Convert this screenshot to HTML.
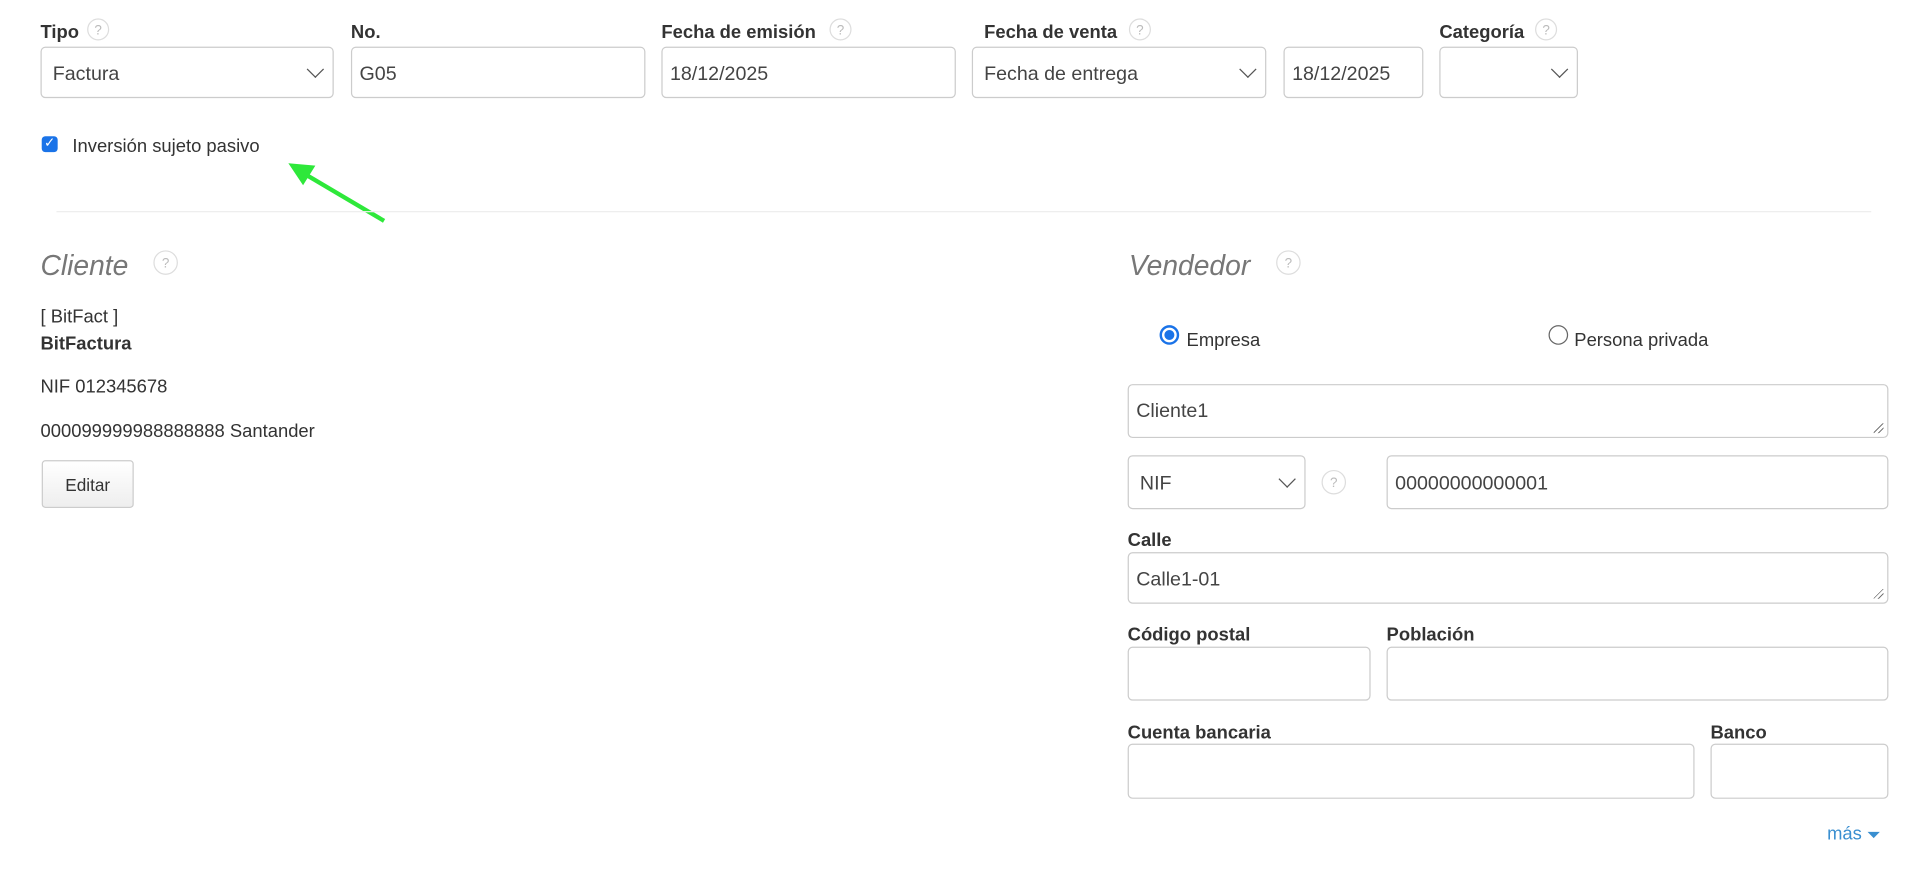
<!DOCTYPE html>
<html><head><meta charset="utf-8"><style>
html,body{margin:0;padding:0;background:#fff;overflow:hidden}
#w{position:absolute;left:0;top:0;width:1568px;height:716px;transform:scale(1.22704);transform-origin:0 0;font-family:"Liberation Sans",sans-serif;color:#333}
.a{position:absolute}
.lb{position:absolute;font-weight:bold;font-size:15px;line-height:18px;color:#333;margin-top:2px}
.q{position:absolute;width:18px;height:18px;border:1px solid #ddd;border-radius:50%;color:#bbb;font-size:11px;line-height:18px;text-align:center;box-sizing:border-box}
.in{position:absolute;border:1px solid #ccc;border-radius:4px;box-sizing:border-box;font-family:"Liberation Sans",sans-serif;font-size:16px;color:#444;padding-left:9px;padding-top:3px;display:flex;align-items:center}
.sel:after{content:"";position:absolute;right:9px;top:50%;width:9px;height:9px;border-right:1.5px solid #555;border-bottom:1.5px solid #555;transform:translateY(-75%) rotate(45deg)}
.ta:after{content:"";position:absolute;right:3px;bottom:3px;width:8px;height:8px;background:linear-gradient(135deg,transparent 45%,#777 45%,#777 52%,transparent 52%,transparent 70%,#777 70%,#777 77%,transparent 77%)}
.tx{position:absolute;font-size:15px;line-height:18px;margin-top:2px}
.h{position:absolute;font-style:italic;font-size:23px;color:#777;line-height:26px;margin-top:1px}
</style></head><body><div id="w">
<div class="lb" style="left:33px;top:16px">Tipo</div><div class="q" style="left:71px;top:15px">?</div>
<div class="lb" style="left:286px;top:16px">No.</div>
<div class="lb" style="left:539px;top:16px">Fecha de emisión</div><div class="q" style="left:676px;top:15px">?</div>
<div class="lb" style="left:802px;top:16px">Fecha de venta</div><div class="q" style="left:920px;top:15px">?</div>
<div class="lb" style="left:1173px;top:16px">Categoría</div><div class="q" style="left:1251px;top:15px">?</div>
<div class="in sel" style="left:33px;top:38px;width:239px;height:42px">Factura</div>
<div class="in" style="left:286px;top:38px;width:240px;height:42px;padding-left:6px">G05</div>
<div class="in" style="left:539px;top:38px;width:240px;height:42px;padding-left:6px">18/12/2025</div>
<div class="in sel" style="left:792px;top:38px;width:240px;height:42px">Fecha de entrega</div>
<div class="in" style="left:1046px;top:38px;width:114px;height:42px;padding-left:6px">18/12/2025</div>
<div class="in sel" style="left:1173px;top:38px;width:113px;height:42px"></div>
<div class="a" style="left:34px;top:111px;width:13px;height:13px;background:#1a73e8;border-radius:3px;color:#fff;font-size:11px;line-height:13px;text-align:center">✓</div>
<div class="tx" style="left:59px;top:109px">Inversión sujeto pasivo</div>
<svg class="a" style="left:225px;top:125px" width="100" height="65"><line x1="88" y1="55" x2="22" y2="16" stroke="#2ee83a" stroke-width="3.5"/><polygon points="10,8 32,10 22,26" fill="#2ee83a"/></svg>
<div class="a" style="left:46px;top:172px;width:1479px;height:1px;background:#eee"></div>
<div class="h" style="left:33px;top:202px">Cliente</div><div class="q" style="left:125px;top:204px;width:20px;height:20px;line-height:20px">?</div>
<div class="tx" style="left:33px;top:248px">[ BitFact ]</div>
<div class="tx" style="left:33px;top:270px;font-weight:bold">BitFactura</div>
<div class="tx" style="left:33px;top:305px">NIF 012345678</div>
<div class="tx" style="left:33px;top:341px">000099999988888888 Santander</div>
<div class="a" style="left:34px;top:375px;width:75px;height:39px;box-sizing:border-box;border:1px solid #ccc;border-radius:3px;background:linear-gradient(#fff,#eee);font-size:14px;text-align:center;line-height:38px">Editar</div>
<div class="h" style="left:920px;top:202px">Vendedor</div><div class="q" style="left:1040px;top:204px;width:20px;height:20px;line-height:20px">?</div>
<div class="a" style="left:945px;top:265px;width:16px;height:16px;box-sizing:border-box;border:2px solid #1a73e8;border-radius:50%;background:radial-gradient(#1a73e8 45%,#fff 50%)"></div>
<div class="tx" style="left:967px;top:267px">Empresa</div>
<div class="a" style="left:1262px;top:265px;width:16px;height:16px;box-sizing:border-box;border:1px solid #666;border-radius:50%"></div>
<div class="tx" style="left:1283px;top:267px">Persona privada</div>
<div class="in ta" style="left:919px;top:313px;width:620px;height:44px;padding-left:6px;align-items:flex-start;padding-top:13px">Cliente1</div>
<div class="in sel" style="left:919px;top:371px;width:145px;height:44px">NIF</div>
<div class="q" style="left:1077px;top:383px;width:20px;height:20px;line-height:20px">?</div>
<div class="in" style="left:1130px;top:371px;width:409px;height:44px;padding-left:6px">00000000000001</div>
<div class="lb" style="left:919px;top:430px">Calle</div>
<div class="in ta" style="left:919px;top:450px;width:620px;height:42px;padding-left:6px">Calle1-01</div>
<div class="lb" style="left:919px;top:507px">Código postal</div>
<div class="lb" style="left:1130px;top:507px">Población</div>
<div class="in" style="left:919px;top:527px;width:198px;height:44px"></div>
<div class="in" style="left:1130px;top:527px;width:409px;height:44px"></div>
<div class="lb" style="left:919px;top:587px">Cuenta bancaria</div>
<div class="lb" style="left:1394px;top:587px">Banco</div>
<div class="in" style="left:919px;top:606px;width:462px;height:45px"></div>
<div class="in" style="left:1394px;top:606px;width:145px;height:45px"></div>
<div class="a" style="left:1489px;top:671px;font-size:15px;color:#3a8fd0">más <span style="display:inline-block;width:0;height:0;border-left:5px solid transparent;border-right:5px solid transparent;border-top:5px solid #3a8fd0;vertical-align:middle"></span></div>
</div></body></html>
